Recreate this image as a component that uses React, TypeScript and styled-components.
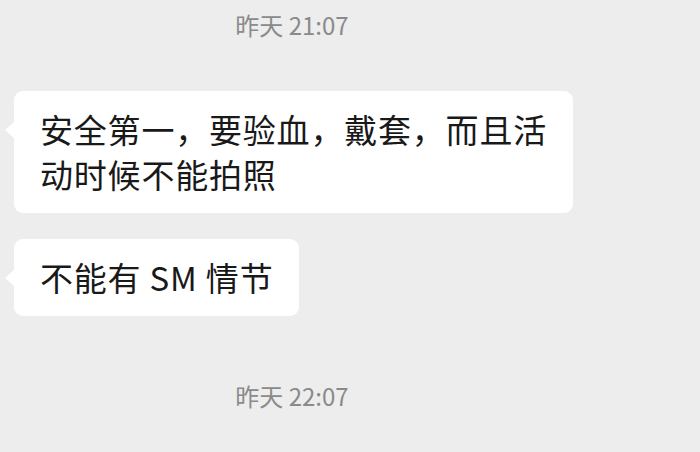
import { FunctionComponent } from "react";
import styled, { createGlobalStyle } from "styled-components";

const GlobalStyle = createGlobalStyle`
  html, body {
    margin: 0;
    padding: 0;
    background: #ededed;
  }
  body {
    font-family: "Noto Sans CJK SC", "Noto Sans", sans-serif;
  }
`;

const Screen = styled.div`
  width: 700px;
  height: 452px;
  background: #ededed;
  overflow: hidden;
  display: flex;
  flex-direction: column;
`;

const TimeRow = styled.div<{ $top: number; $bottom: number }>`
  display: flex;
  justify-content: center;
  padding-right: 116px;
  margin-top: ${(p) => p.$top}px;
  margin-bottom: ${(p) => p.$bottom}px;
  font-family: "Noto Sans CJK SC", sans-serif;
  font-size: 24px;
  line-height: 30px;
  color: #8a8a8a;
`;

const MessageRow = styled.div<{ $gap: number }>`
  display: flex;
  padding-left: 14px;
  margin-bottom: ${(p) => p.$gap}px;
`;

const Bubble = styled.div`
  position: relative;
  background: #ffffff;
  border-radius: 9px;
  padding: 16px 26px 16px 26px;
  font-size: 33px;
  line-height: 45px;
  color: #191919;
  letter-spacing: 0.8px;

  &::before {
    content: "";
    position: absolute;
    left: -9px;
    top: 30px;
    border-top: 9px solid transparent;
    border-bottom: 9px solid transparent;
    border-right: 10px solid #ffffff;
  }
`;

const Line = styled.div`
  white-space: nowrap;
`;

const messages = [
  { lines: ["安全第一，要验血，戴套，而且活", "动时候不能拍照"], gap: 26 },
  { lines: ["不能有 SM 情节"], gap: 0 },
];

const App: FunctionComponent = () => {
  return (
    <Screen>
      <GlobalStyle />
      <TimeRow $top={10} $bottom={51}>昨天 21:07</TimeRow>
      {messages.map((msg, i) => (
        <MessageRow key={i} $gap={msg.gap}>
          <Bubble>
            {msg.lines.map((l) => (
              <Line key={l}>{l}</Line>
            ))}
          </Bubble>
        </MessageRow>
      ))}
      <TimeRow $top={65} $bottom={0}>昨天 22:07</TimeRow>
    </Screen>
  );
};

export default App;
